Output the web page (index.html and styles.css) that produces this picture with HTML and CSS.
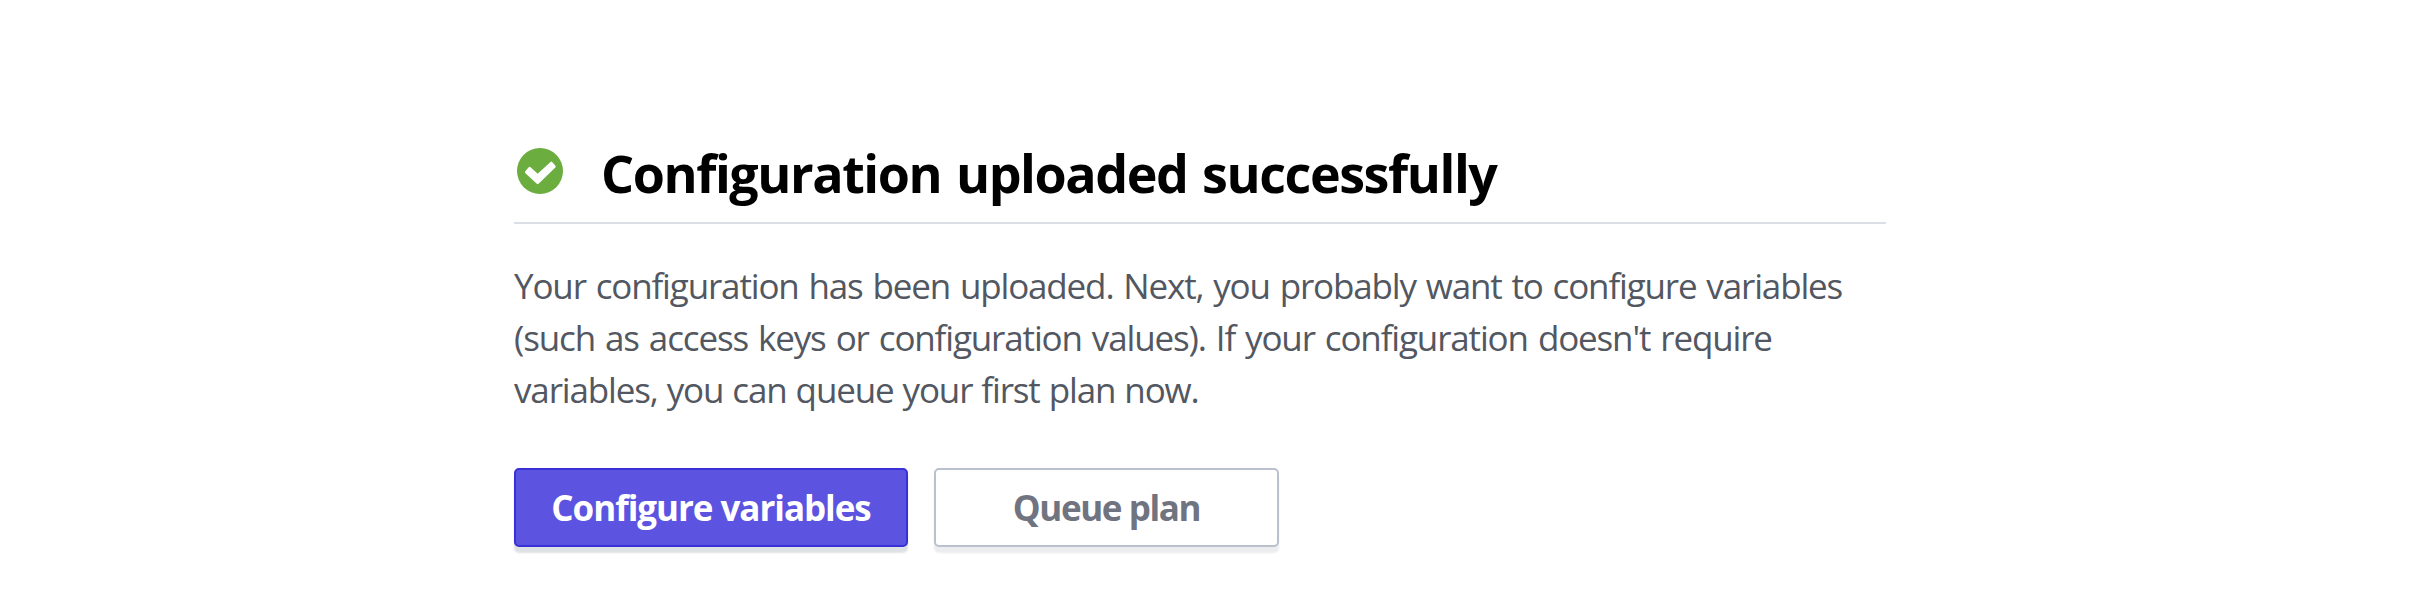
FILE: index.html
```
<!DOCTYPE html>
<html lang="en">
<head>
<meta charset="utf-8">
<title>Configuration uploaded</title>
<link rel="stylesheet" href="styles.css">
</head>
<body>
<main class="notice">
  <header class="notice-header">
    <svg class="status-icon" viewBox="0 0 46 46" aria-hidden="true">
      <circle cx="23" cy="23" r="23" fill="#6cad3f"/>
      <path d="M9.3 24.2 L12.7 20.2 L20.7 27.4 L34.4 15 L37.4 18.6 L20.7 34.9 Z" fill="#fff" stroke="#fff" stroke-width="2.6" stroke-linejoin="round"/>
    </svg>
    <h1 class="title">Configuration uploaded successfully</h1>
  </header>
  <p class="message">
    <span class="line">Your configuration has been uploaded. Next, you probably want to configure variables</span>
    <span class="line line-middle">(such as access keys or configuration values). If your configuration doesn't require</span>
    <span class="line line-last">variables, you can queue your first plan now.</span>
  </p>
  <div class="actions">
    <button class="button button-primary">Configure variables</button>
    <button class="button button-secondary">Queue plan</button>
  </div>
</main>
</body>
</html>
```
FILE: styles.css
```
* { box-sizing: border-box; }
body { margin: 0; min-height: 100vh; background: #fff; }
.notice { width: 1372px; margin: 0 0 0 514px; padding: 134px 0 64px; font-family: "Open Sans", "Noto Sans", sans-serif; font-variant-ligatures: none; }
.notice-header { display: flex; height: 90px; padding: 14px 0 0 3px; border-bottom: 2px solid #dce0e6; }
.status-icon { width: 46px; height: 46px; flex: none; }
.title { margin: -11px 0 0 38px; font-size: 52px; line-height: 72px; font-weight: 700; color: #000; white-space: nowrap; letter-spacing: -1.43px; word-spacing: 2.5px; }
.message { display: flex; flex-direction: column; align-items: flex-start; margin: 36px 0 0; font-size: 35px; line-height: 52px; color: #525761; letter-spacing: -1.15px; word-spacing: 1.9px; }
.line { white-space: nowrap; }
.line-middle { word-spacing: 2.1px; }
.line-last { word-spacing: 1.1px; }
.actions { display: flex; gap: 26px; margin-top: 52px; }
.button { height: 79px; padding: 0; border: 2px solid; border-radius: 5px; font-family: inherit; font-size: 35px; line-height: 52px; font-weight: 700; letter-spacing: -1.05px; white-space: nowrap; }
.button-primary { width: 394px; color: #fff; background: #5c53e1; border-color: #3a30d8; box-shadow: 0 6px 2px #dfe2e4; }
.button-secondary { width: 345px; color: #6f7480; background: #fff; border-color: #bac0ce; box-shadow: 0 6px 2px #ebedef; letter-spacing: -1.4px; }
```
